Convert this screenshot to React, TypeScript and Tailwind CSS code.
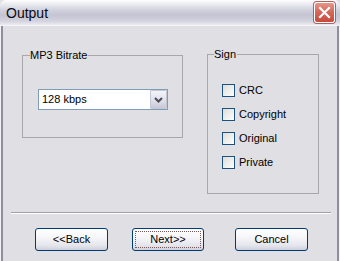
import React from "react";

const font = { fontFamily: '"Liberation Sans", Arial, sans-serif' };

function Checkbox({ label }: { label: string }) {
  return (
    <div className="flex items-center h-[13px]">
      <div className="w-[13px] h-[13px] border border-[#1c5180] bg-[linear-gradient(135deg,#dcdcd7_0%,#f4f4f2_70%,#ffffff_100%)]" />
      <span className="ml-[4px] text-[11px] leading-[13px] text-black">{label}</span>
    </div>
  );
}

function Button({ label, focused, className }: { label: string; focused?: boolean; className?: string }) {
  return (
    <div
      className={
        "h-[23px] rounded-[3px] border border-[#003c74] bg-[linear-gradient(to_bottom,#ffffff_0%,#f6f6f9_40%,#e4e4ec_80%,#cfcfdd_100%)] flex " +
        (className ?? "")
      }
    >
      {focused ? (
        <div className="flex-1 m-[2px] border border-dotted border-[#7a5a5a] flex items-center justify-center text-[11px] text-black">
          {label}
        </div>
      ) : (
        <div className="flex-1 flex items-center justify-center text-[11px] text-black">{label}</div>
      )}
    </div>
  );
}

export default function App() {
  return (
    <div className="w-[340px] h-[261px] overflow-hidden bg-[#e0dfe3]" style={font}>
      {/* Title bar */}
      <div className="h-[26px] rounded-t-[6px] bg-[linear-gradient(to_bottom,#ffffff_0%,#f0f0f5_12%,#d2d2de_40%,#c4c4d2_60%,#d4d4e0_85%,#ececf2_100%)] flex items-center border-b border-[#f4f4f8]">
        <span className="ml-[6px] text-[14px] leading-none text-[#0a0a14] pt-[1px]">Output</span>
        <div className="ml-auto mr-[5px] w-[21px] h-[21px] rounded-[3px] border border-white bg-[linear-gradient(to_bottom,#e8958a_0%,#d8685c_45%,#c44b3e_100%)] flex items-center justify-center shadow-[0_0_0_1px_#b06060]">
          <svg width="13" height="13" viewBox="0 0 13 13">
            <path d="M2 2 L11 11 M11 2 L2 11" stroke="#ffffff" strokeWidth="2.2" strokeLinecap="square" />
          </svg>
        </div>
      </div>
      {/* Body */}
      <div className="h-[235px] border-l border-r border-l-[#f2f2f6] border-r-[#f2f2f6]">
        <div className="h-full border-l-2 border-r-2 border-[#8e8e9e] pt-[22px]">
          <div className="flex items-start pl-[19px]">
            <fieldset className="mt-px w-[161px] border border-[#a8a7ac] px-[7px]">
              <legend className="text-[11px] leading-[13px] text-black pr-px">MP3 Bitrate</legend>
              <div className="h-[75px] pt-[27px] pl-[8px]">
                <div className="w-[130px] h-[21px] border border-[#7f9db9] bg-white flex items-center">
                  <span className="ml-[3px] text-[11px] text-black flex-1">128 kbps</span>
                  <div className="w-[17px] h-[19px] border border-[#c3c6d4] rounded-[1px] bg-[linear-gradient(to_bottom,#f4f4f8_0%,#dedee8_60%,#c8c8d6_100%)] flex items-center justify-center">
                    <svg width="9" height="6" viewBox="0 0 9 6">
                      <path d="M1 1 L4.5 4.5 L8 1" stroke="#4a4a5a" strokeWidth="2" fill="none" />
                    </svg>
                  </div>
                </div>
              </div>
            </fieldset>
            <fieldset className="ml-[24px] w-[112px] border border-[#a8a7ac] pl-[6px]">
              <legend className="text-[11px] leading-[13px] text-black pr-px">Sign</legend>
              <div className="h-[132px] pt-[23px] pl-[8px] flex flex-col gap-[11px]">
                <Checkbox label="CRC" />
                <Checkbox label="Copyright" />
                <Checkbox label="Original" />
                <Checkbox label="Private" />
              </div>
            </fieldset>
          </div>
          <div className="mt-[18px] ml-[8px] w-[320px] border-t border-t-[#a0a0a8] border-b border-b-white" />
          <div className="mt-[14px] flex">
            <Button label="<<Back" className="ml-[32px] w-[73px]" />
            <Button label="Next>>" focused className="ml-[24px] w-[72px]" />
            <Button label="Cancel" className="ml-[31px] w-[73px]" />
          </div>
        </div>
      </div>
    </div>
  );
}
